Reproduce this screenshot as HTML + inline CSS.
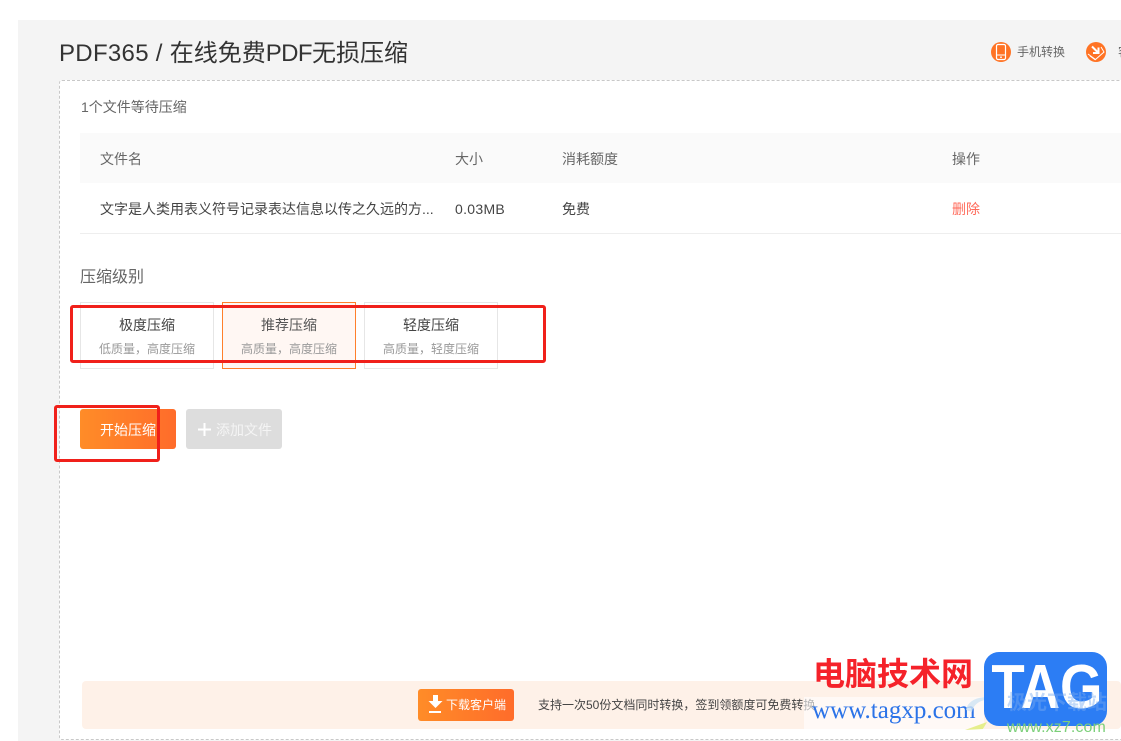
<!DOCTYPE html>
<html lang="zh">
<head>
<meta charset="utf-8">
<title>PDF365</title>
<style>
html,body{margin:0;padding:0;width:1121px;height:741px;overflow:hidden;background:#fff}
body{position:relative;font-family:"Liberation Sans","Noto Sans CJK SC",sans-serif;color:#333}
.a{position:absolute;white-space:nowrap}
.t{line-height:20px;font-size:14px}
</style>
</head>
<body>
<div class="a" style="left:18px;top:20px;width:1103px;height:721px;background:#f4f4f4"></div>
<div class="a" style="left:59px;top:80px;width:1080px;height:658px;background:#fff;border:1px dashed #c8c8c8;border-radius:3px"></div>

<div class="a" style="left:59px;top:37px;font-size:24px;line-height:34px;color:#333"><span style="letter-spacing:.3px">PDF365 / </span>在线免费<span style="letter-spacing:-.6px">PDF</span>无损压缩</div>

<svg class="a" style="left:991px;top:42px" width="20" height="20" viewBox="0 0 20 20"><circle cx="10" cy="10" r="10" fill="#ff7324"/><rect x="5.500" y="2.500" width="9" height="15" rx="1.500" fill="none" stroke="#fff" stroke-width="1.200"/><path d="M5.500 13h9" stroke="#fff" stroke-width="1"/><path d="M9 15.200h2" stroke="#fff" stroke-width="1.200"/></svg>
<div class="a" style="left:1017px;top:42px;font-size:12px;line-height:20px;color:#666">手机转换</div>
<svg class="a" style="left:1086px;top:42px" width="20" height="20" viewBox="0 0 20 20"><circle cx="10" cy="10" r="10" fill="#ff7324"/><path d="M2 12l7.500 5.500L18 10l-3-5" fill="none" stroke="#fff" stroke-width="1"/><path d="M4 14l5.500 4" fill="none" stroke="#fff" stroke-width="1"/><path d="M6 4.500l6 6M12.500 5.500v5.500H7" fill="none" stroke="#fff" stroke-width="2"/></svg>
<div class="a" style="left:1118px;top:42px;font-size:12px;line-height:20px;color:#666">客</div>

<div class="a t" style="left:81px;top:97px;color:#666">1个文件等待压缩</div>

<div class="a" style="left:80px;top:133px;width:1041px;height:50px;background:#fafafa"></div>
<div class="a t" style="left:100px;top:149px;color:#666">文件名</div>
<div class="a t" style="left:455px;top:149px;color:#666">大小</div>
<div class="a t" style="left:562px;top:149px;color:#666">消耗额度</div>
<div class="a t" style="left:952px;top:149px;color:#666">操作</div>

<div class="a" style="left:80px;top:233px;width:1041px;height:1px;background:#eee"></div>
<div class="a t" style="left:100px;top:199px;color:#444">文字是人类用表义符号记录表达信息以传之久远的方...</div>
<div class="a t" style="left:455px;top:199px;color:#444;letter-spacing:.3px">0.03MB</div>
<div class="a t" style="left:562px;top:199px;color:#444">免费</div>
<div class="a t" style="left:952px;top:199px;color:#ff6a5a">删除</div>

<div class="a t" style="left:80px;top:268px;font-size:16px;color:#666">压缩级别</div>

<div class="a" style="left:80px;top:302px;width:132px;height:65px;border:1px solid #e6e6e6"></div>
<div class="a" style="left:222px;top:302px;width:132px;height:65px;border:1px solid #ff7f2b;background:#fff7f3"></div>
<div class="a" style="left:364px;top:302px;width:132px;height:65px;border:1px solid #e6e6e6"></div>

<div class="a t" style="left:80px;width:134px;top:315px;text-align:center;color:#444">极度压缩</div>
<div class="a t" style="left:80px;width:134px;top:339px;text-align:center;font-size:12px;color:#999">低质量，高度压缩</div>
<div class="a t" style="left:222px;width:134px;top:315px;text-align:center;color:#555">推荐压缩</div>
<div class="a t" style="left:222px;width:134px;top:339px;text-align:center;font-size:12px;color:#999">高质量，高度压缩</div>
<div class="a t" style="left:364px;width:134px;top:315px;text-align:center;color:#444">轻度压缩</div>
<div class="a t" style="left:364px;width:134px;top:339px;text-align:center;font-size:12px;color:#999">高质量，轻度压缩</div>

<div class="a t" style="left:80px;top:409px;width:96px;height:40px;line-height:43px;border-radius:3px;background:linear-gradient(90deg,#ff8c28,#ff6c2a);color:#fff;text-align:center">开始压缩</div>
<div class="a" style="left:186px;top:409px;width:96px;height:40px;border-radius:3px;background:#ddd"></div>
<svg class="a" style="left:198px;top:423px" width="13" height="13" viewBox="0 0 13 13"><path d="M6.500 0v13M0 6.500h13" stroke="#fff" stroke-width="2"/></svg>
<div class="a t" style="left:216px;top:420px;height:20px;line-height:21px;font-size:14px;color:#f4f4f4">添加文件</div>

<div class="a" style="left:82px;top:681px;width:1039px;height:48px;border-radius:4px;background:#fef1e8"></div>
<div class="a" style="left:418px;top:689px;width:96px;height:32px;border-radius:3px;background:linear-gradient(90deg,#ff8c28,#ff6c2a)"></div>
<svg class="a" style="left:428px;top:695px" width="15" height="19" viewBox="0 0 15 19"><path d="M4.500 0h5v6H14L7 13 0 6h4.500z" fill="#fff" transform="translate(.5 0)"/><rect x="1" y="16" width="12" height="2" fill="#fff"/></svg>
<div class="a" style="left:446px;top:695px;font-size:12px;line-height:20px;color:#fff">下载客户端</div>
<div class="a" style="left:538px;top:695px;font-size:12px;line-height:20px;color:#444">支持一次50份文档同时转换，签到领额度可免费转换</div>

<!-- red annotation boxes -->
<div class="a" style="left:70px;top:305px;width:470px;height:52px;border:3px solid #f0201a;border-radius:3px"></div>
<div class="a" style="left:54px;top:405px;width:100px;height:51px;border:3px solid #f0201a;border-radius:3px"></div>

<!-- watermark -->
<div class="a" style="left:804px;top:697px;width:180px;height:32px;background:rgba(255,255,255,.6)"></div>
<div class="a" style="left:813px;top:655px;font-size:32px;line-height:38px;font-weight:700;color:#f5222a">电脑技术网</div>
<div class="a" style="left:812px;top:697px;font-size:25px;line-height:28px;color:#2b73e8;font-family:'Liberation Serif',serif">www.tagxp.com</div>
<svg class="a" style="left:960px;top:688px" width="50" height="46" viewBox="0 0 50 46"><path d="M6 22C8 10 26 6 36 12 24 10 14 14 12 24z" fill="#cfe4f4" opacity=".8"/><path d="M5 42l22-8-4 7z" fill="#e6ee8c"/></svg>
<div class="a" style="left:984px;top:652px;width:123px;height:74px;border-radius:15px;background:#2c7df4"></div>
<div class="a" style="left:984px;top:649px;width:123px;text-align:center;font-size:62px;line-height:78px;font-weight:700;color:#fff;transform:scaleX(.88);transform-origin:center">TAG</div>
<div class="a" style="left:1007px;top:690px;font-size:20px;line-height:26px;color:rgba(120,170,240,.45);font-weight:700">极光下载站</div>
<div class="a" style="left:1007px;top:716px;font-size:16px;line-height:24px;color:#7ccf7a;letter-spacing:.1px">www.xz7.com</div>
</body>
</html>
